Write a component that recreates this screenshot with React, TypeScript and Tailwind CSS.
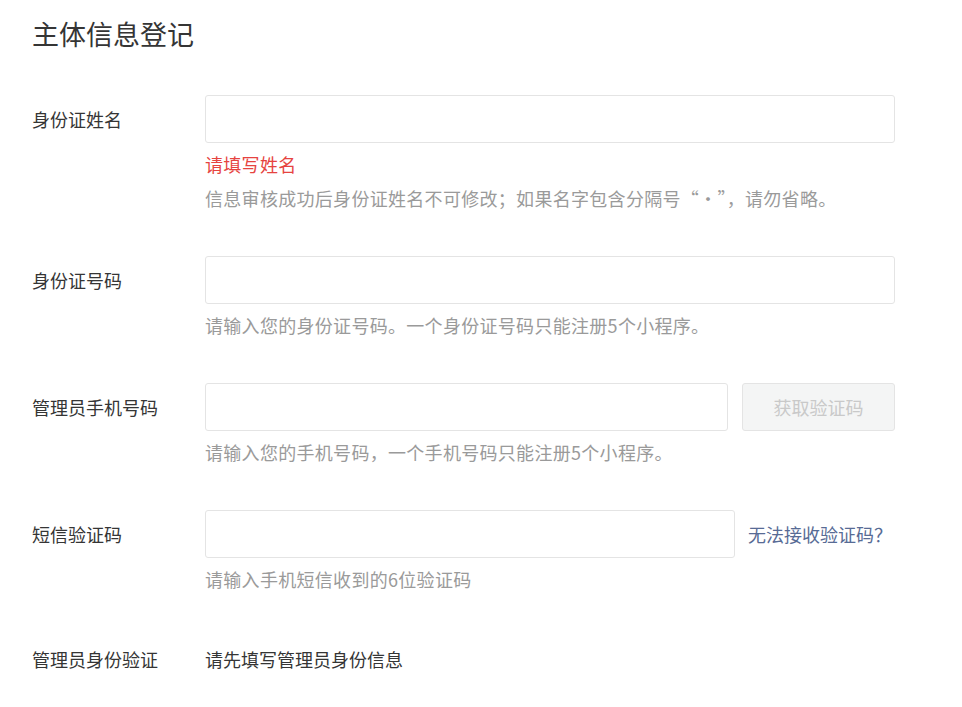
const font = { fontFamily: '"Noto Sans CJK SC", "Liberation Sans", sans-serif' };

function Row({ label, children }: { label: string; children: React.ReactNode }) {
  return (
    <div className="flex mt-[41px]">
      <div className="w-[173px] shrink-0 leading-[48px] text-[18px] text-[#353535]">{label}</div>
      <div className="flex-1">{children}</div>
    </div>
  );
}

function Field({ width }: { width: string }) {
  return <input className={`h-[48px] ${width} border border-[#e4e4e4] rounded-[3px] px-3 outline-none bg-white`} />;
}

function Hint({ children, red }: { children: React.ReactNode; red?: boolean }) {
  return (
    <div className={`leading-[34px] text-[18px] tracking-[0.3px] ${red ? 'text-[#e64340]' : 'text-[#9a9a9a]'}`}>{children}</div>
  );
}

export default function App() {
  return (
    <div className="bg-white min-h-[707px] pl-8 pt-[14px]" style={font}>
      <h1 className="text-[27px] leading-[40px] text-[#353535] mb-0">主体信息登记</h1>

      <Row label="身份证姓名">
        <Field width="w-[690px]" />
        <div className="mt-[4px]">
          <Hint red>请填写姓名</Hint>
          <Hint>信息审核成功后身份证姓名不可修改；如果名字包含分隔号“·”，请勿省略。</Hint>
        </div>
      </Row>

      <Row label="身份证号码">
        <Field width="w-[690px]" />
        <div className="mt-[4px]">
          <Hint>请输入您的身份证号码。一个身份证号码只能注册5个小程序。</Hint>
        </div>
      </Row>

      <Row label="管理员手机号码">
        <div className="flex gap-[14px]">
          <Field width="w-[523px]" />
          <button className="h-[48px] w-[153px] border border-[#e4e4e4] rounded-[3px] bg-[#f4f5f5] text-[#c9c9c9] text-[18px]">
            获取验证码
          </button>
        </div>
        <div className="mt-[4px]">
          <Hint>请输入您的手机号码，一个手机号码只能注册5个小程序。</Hint>
        </div>
      </Row>

      <Row label="短信验证码">
        <div className="flex items-center gap-[13px]">
          <Field width="w-[530px]" />
          <span className="text-[18px] text-[#576b95]">无法接收验证码？</span>
        </div>
        <div className="mt-[4px]">
          <Hint>请输入手机短信收到的6位验证码</Hint>
        </div>
      </Row>

      <div className="flex mt-[39px]">
        <div className="w-[173px] shrink-0 leading-[48px] text-[18px] text-[#353535]">管理员身份验证</div>
        <div className="leading-[48px] text-[18px] text-[#353535]">请先填写管理员身份信息</div>
      </div>
    </div>
  );
}
